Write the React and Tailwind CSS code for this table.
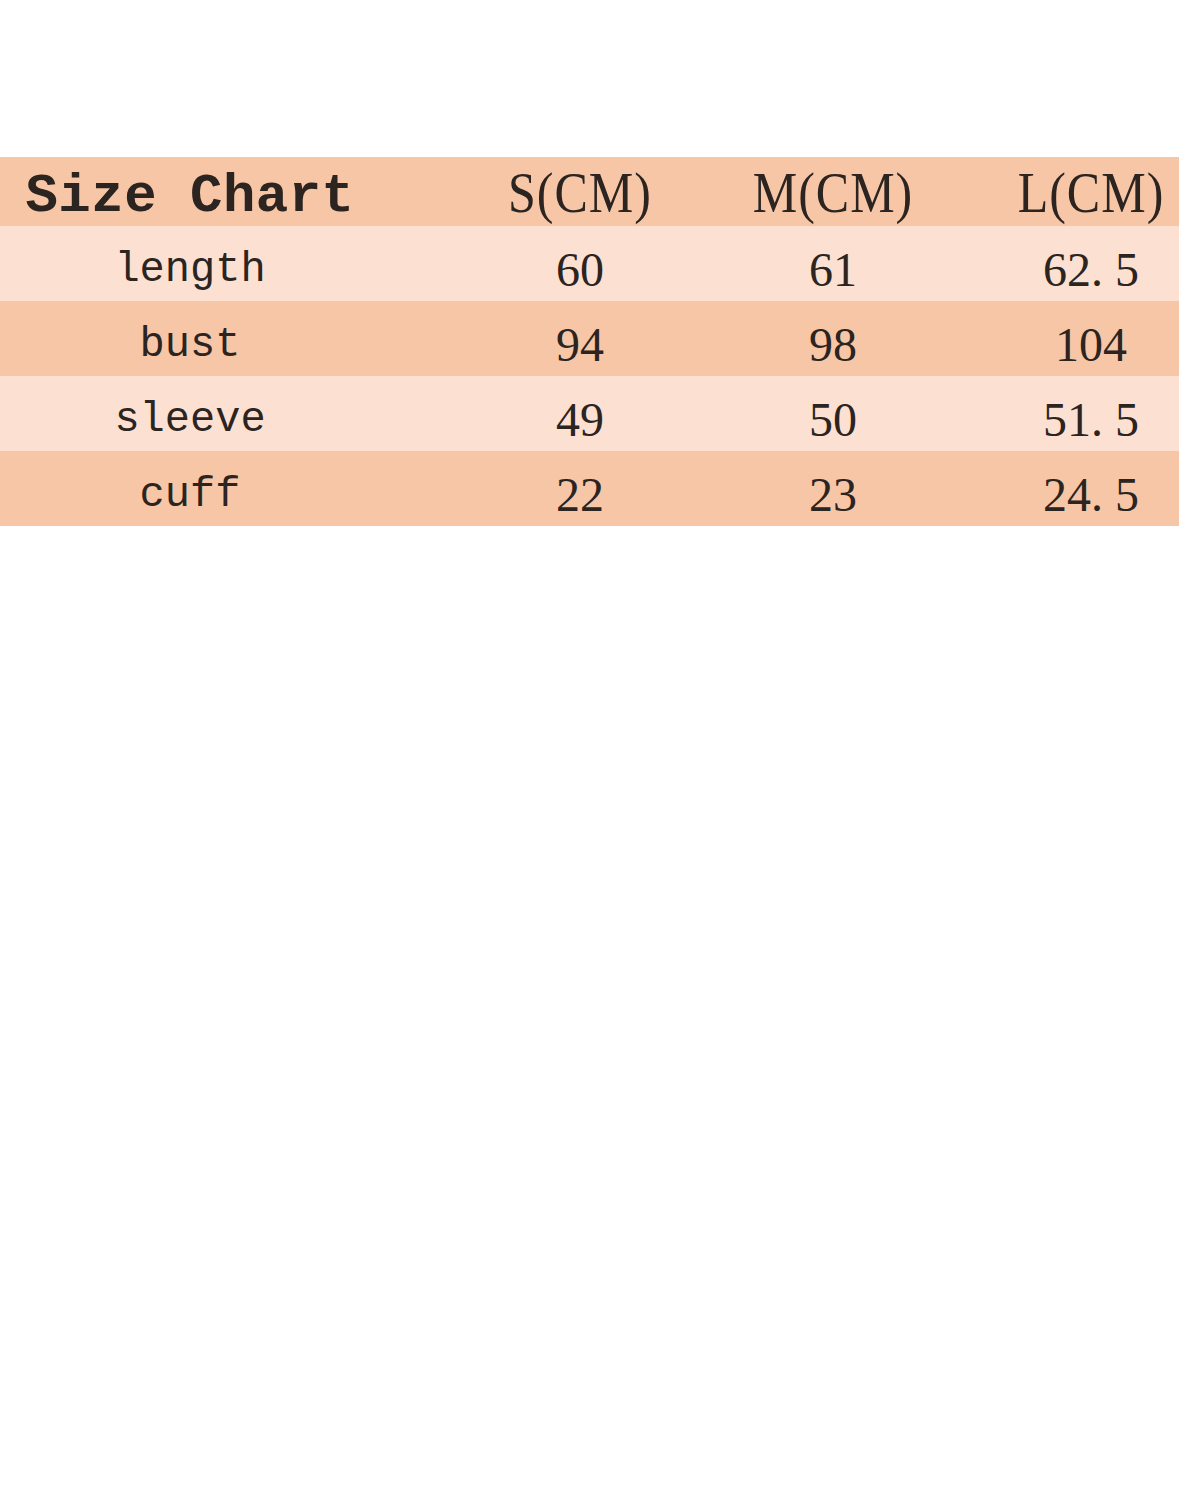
export default function App() {
  const rows = [
    { label: "length", s: "60", m: "61", l: "62. 5", dark: false },
    { label: "bust", s: "94", m: "98", l: "104", dark: true },
    { label: "sleeve", s: "49", m: "50", l: "51. 5", dark: false },
    { label: "cuff", s: "22", m: "23", l: "24. 5", dark: true },
  ];
  return (
    <div className="w-[1179px] h-[1492px] bg-white pt-[157px] text-[#2b2420]">
      <div className="grid grid-cols-[454px_252px_254px_1fr] h-[69px] bg-[#f7c6a6] items-center">
        <div className="pr-[74px] pt-[10px] text-center text-[54px] font-bold leading-none tracking-[0.5px] font-['Liberation_Mono',monospace]">Size Chart</div>
        <div className="pt-[2px] text-center text-[50px] leading-none tracking-[1px] scale-y-[1.12] font-['Liberation_Serif',serif]">S(CM)</div>
        <div className="pt-[2px] text-center text-[50px] leading-none tracking-[1px] scale-y-[1.12] font-['Liberation_Serif',serif]">M(CM)</div>
        <div className="pl-[43px] pt-[2px] text-center text-[50px] leading-none tracking-[1px] scale-y-[1.12] font-['Liberation_Serif',serif]">L(CM)</div>
      </div>
      {rows.map((r) => (
        <div
          key={r.label}
          className={
            r.dark
              ? "grid grid-cols-[454px_252px_254px_1fr] h-[75px] pt-[13px] items-center bg-[#f7c6a6]"
              : "grid grid-cols-[454px_252px_254px_1fr] h-[75px] pt-[13px] items-center bg-[#fce0d2]"
          }
        >
          <div className="pr-[74px] text-center text-[42px] leading-none font-['Liberation_Mono',monospace]">{r.label}</div>
          <div className="text-center text-[48px] leading-none font-['Liberation_Serif',serif]">{r.s}</div>
          <div className="text-center text-[48px] leading-none font-['Liberation_Serif',serif]">{r.m}</div>
          <div className="pl-[43px] text-center text-[48px] leading-none font-['Liberation_Serif',serif]">{r.l}</div>
        </div>
      ))}
    </div>
  );
}
